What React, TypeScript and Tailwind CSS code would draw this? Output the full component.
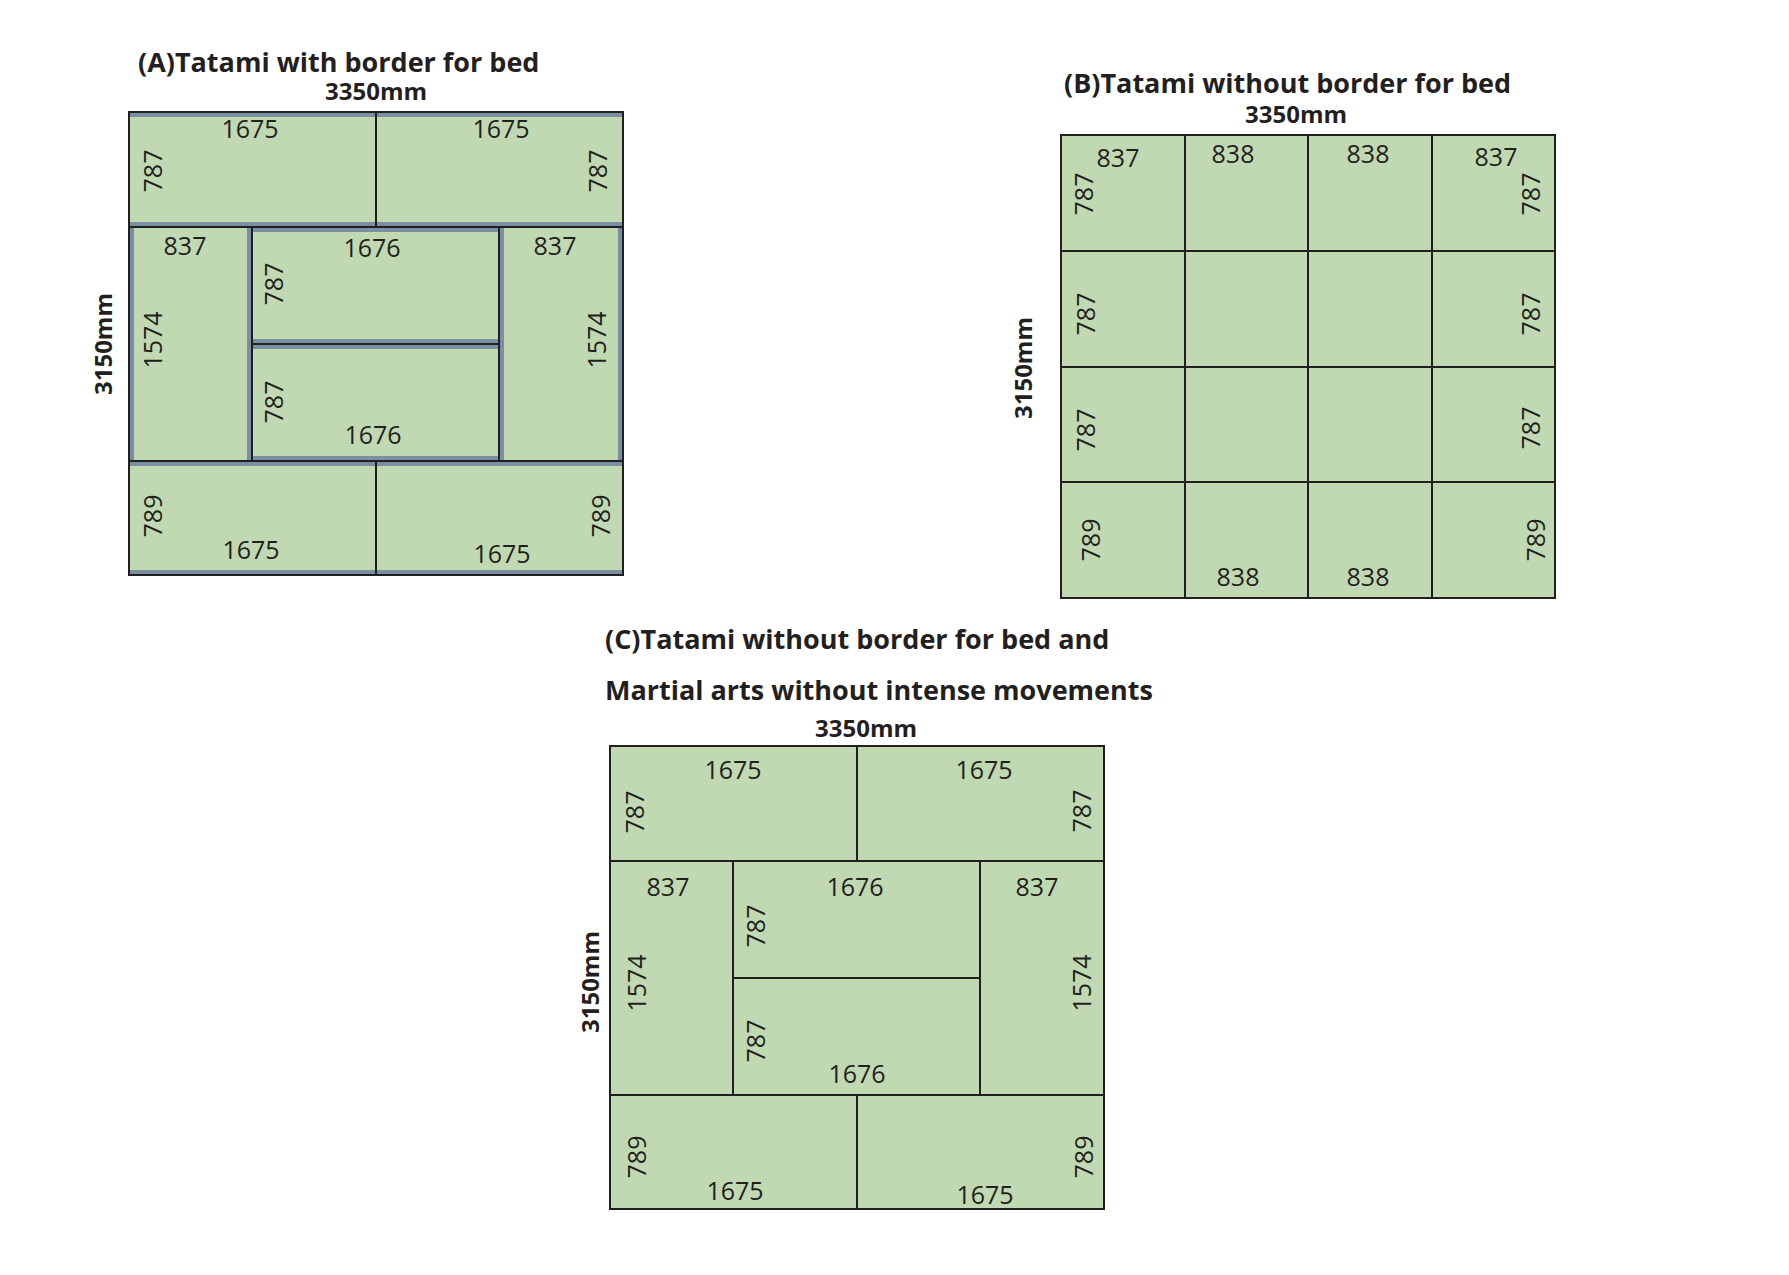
import React from "react";

type Lab = { t: string; c: string; r?: boolean };

function Labels({ items }: { items: Lab[] }) {
  return (
    <>
      {items.map((l, i) => (
        <span
          key={i}
          className={
            "absolute -translate-x-1/2 -translate-y-1/2 whitespace-nowrap text-[25px] leading-none text-[#231f20] " +
            l.c +
            (l.r ? " -rotate-90" : "")
          }
        >
          {l.t}
        </span>
      ))}
    </>
  );
}

const labelsA: Lab[] = [
  { t: "1675", c: "left-[120px] top-[15px]" },
  { t: "787", c: "left-[22px] top-[58px]", r: true },
  { t: "1675", c: "left-[371px] top-[15px]" },
  { t: "787", c: "left-[467px] top-[58px]", r: true },
  { t: "837", c: "left-[55px] top-[132px]" },
  { t: "1574", c: "left-[22px] top-[227px]", r: true },
  { t: "1676", c: "left-[242px] top-[134px]" },
  { t: "787", c: "left-[143px] top-[171px]", r: true },
  { t: "787", c: "left-[143px] top-[289px]", r: true },
  { t: "1676", c: "left-[243px] top-[321px]" },
  { t: "837", c: "left-[425px] top-[132px]" },
  { t: "1574", c: "left-[466px] top-[227px]", r: true },
  { t: "789", c: "left-[22px] top-[403px]", r: true },
  { t: "1675", c: "left-[121px] top-[436px]" },
  { t: "789", c: "left-[470px] top-[403px]", r: true },
  { t: "1675", c: "left-[372px] top-[440px]" },
];

const labelsC: Lab[] = [
  { t: "1675", c: "left-[122px] top-[22px]" },
  { t: "787", c: "left-[23px] top-[65px]", r: true },
  { t: "1675", c: "left-[373px] top-[22px]" },
  { t: "787", c: "left-[470px] top-[64px]", r: true },
  { t: "837", c: "left-[57px] top-[139px]" },
  { t: "1574", c: "left-[25px] top-[236px]", r: true },
  { t: "1676", c: "left-[244px] top-[139px]" },
  { t: "787", c: "left-[144px] top-[179px]", r: true },
  { t: "787", c: "left-[144px] top-[294px]", r: true },
  { t: "1676", c: "left-[246px] top-[326px]" },
  { t: "837", c: "left-[426px] top-[139px]" },
  { t: "1574", c: "left-[470px] top-[236px]", r: true },
  { t: "789", c: "left-[25px] top-[410px]", r: true },
  { t: "1675", c: "left-[124px] top-[443px]" },
  { t: "789", c: "left-[472px] top-[410px]", r: true },
  { t: "1675", c: "left-[374px] top-[447px]" },
];

const labelsB: Lab[] = [
  { t: "837", c: "left-[56px] top-[21px]" },
  { t: "838", c: "left-[171px] top-[17px]" },
  { t: "838", c: "left-[306px] top-[17px]" },
  { t: "837", c: "left-[434px] top-[20px]" },
  { t: "787", c: "left-[21px] top-[58px]", r: true },
  { t: "787", c: "left-[468px] top-[58px]", r: true },
  { t: "787", c: "left-[23px] top-[178px]", r: true },
  { t: "787", c: "left-[468px] top-[178px]", r: true },
  { t: "787", c: "left-[23px] top-[294px]", r: true },
  { t: "787", c: "left-[468px] top-[292px]", r: true },
  { t: "789", c: "left-[28px] top-[404px]", r: true },
  { t: "789", c: "left-[473px] top-[404px]", r: true },
  { t: "838", c: "left-[176px] top-[440px]" },
  { t: "838", c: "left-[306px] top-[440px]" },
];

const TH = "flex-1 border-y-4 border-[#7b8fa3] bg-[#c0d9b2]";
const TV = "border-x-4 border-[#7b8fa3] bg-[#c0d9b2]";
const T = "bg-[#c0d9b2]";

function BoxA() {
  return (
    <div className="relative h-[465px] w-[496px] shrink-0 border-2 border-[#231f20] bg-[#231f20]">
      <div className="flex h-full flex-col gap-[2px]">
        <div className="flex h-[113px] gap-[2px]">
          <div className={TH} />
          <div className={TH} />
        </div>
        <div className="flex h-[232px] gap-[2px]">
          <div className={"w-[121px] " + TV} />
          <div className="flex w-[245px] flex-col gap-[2px]">
            <div className={TH} />
            <div className={TH} />
          </div>
          <div className={"flex-1 " + TV} />
        </div>
        <div className="flex flex-1 gap-[2px]">
          <div className={TH} />
          <div className={TH} />
        </div>
      </div>
      <Labels items={labelsA} />
    </div>
  );
}

function BoxC() {
  return (
    <div className="relative h-[465px] w-[496px] shrink-0 border-2 border-[#231f20] bg-[#231f20]">
      <div className="flex h-full flex-col gap-[2px]">
        <div className="flex h-[113px] gap-[2px]">
          <div className={"flex-1 " + T} />
          <div className={"flex-1 " + T} />
        </div>
        <div className="flex h-[232px] gap-[2px]">
          <div className={"w-[121px] " + T} />
          <div className="flex w-[245px] flex-col gap-[2px]">
            <div className={"flex-1 " + T} />
            <div className={"flex-1 " + T} />
          </div>
          <div className={"flex-1 " + T} />
        </div>
        <div className="flex flex-1 gap-[2px]">
          <div className={"flex-1 " + T} />
          <div className={"flex-1 " + T} />
        </div>
      </div>
      <Labels items={labelsC} />
    </div>
  );
}

function BoxB() {
  return (
    <div className="relative h-[465px] w-[496px] shrink-0 border-2 border-[#231f20] bg-[#231f20]">
      <div className="grid h-full grid-cols-4 grid-rows-4 gap-[2px]">
        {Array.from({ length: 16 }).map((_, i) => (
          <div key={i} className={T} />
        ))}
      </div>
      <Labels items={labelsB} />
    </div>
  );
}

function VLabel({ className }: { className: string }) {
  return (
    <div
      className={
        "w-[26px] rotate-180 whitespace-nowrap text-[24px] font-bold leading-[26px] [writing-mode:vertical-rl] " +
        className
      }
    >
      3150mm
    </div>
  );
}

export default function App() {
  return (
    <div className="h-[1275px] w-[1789px] bg-white font-['Open_Sans',sans-serif] text-[#231f20]">
      <div className="flex items-start">
        {/* A */}
        <div className="ml-[90px] flex w-[534px] shrink-0 flex-col pt-[46px]">
          <div className="ml-[48px] whitespace-nowrap text-[27px] font-bold leading-[32px]">
            (A)Tatami with border for bed
          </div>
          <div className="ml-[38px] w-[496px] text-center text-[24px] font-bold leading-[26px]">3350mm</div>
          <div className="mt-[7px] flex items-center gap-[12px]">
            <VLabel className="mt-[2px]" />
            <BoxA />
          </div>
        </div>
        {/* B */}
        <div className="ml-[386px] flex w-[546px] shrink-0 flex-col pt-[67px]">
          <div className="ml-[54px] whitespace-nowrap text-[27px] font-bold leading-[32px]">
            (B)Tatami without border for bed
          </div>
          <div className="ml-[38px] mt-[2px] w-[496px] text-center text-[24px] font-bold leading-[26px]">3350mm</div>
          <div className="mt-[7px] flex items-center gap-[24px]">
            <VLabel className="mt-[4px]" />
            <BoxB />
          </div>
        </div>
      </div>
      {/* C */}
      <div className="ml-[577px] mt-[14px] flex w-[528px] flex-col">
        <div className="ml-[28px] whitespace-nowrap text-[27px] font-bold leading-[51px]">
          <div>(C)Tatami without border for bed and</div>
          <div>Martial arts without intense movements</div>
        </div>
        <div className="ml-[41px] w-[496px] text-center text-[24px] font-bold leading-[26px]">3350mm</div>
        <div className="mt-[4px] flex items-center gap-[6px]">
          <VLabel className="mt-[10px]" />
          <BoxC />
        </div>
      </div>
    </div>
  );
}
